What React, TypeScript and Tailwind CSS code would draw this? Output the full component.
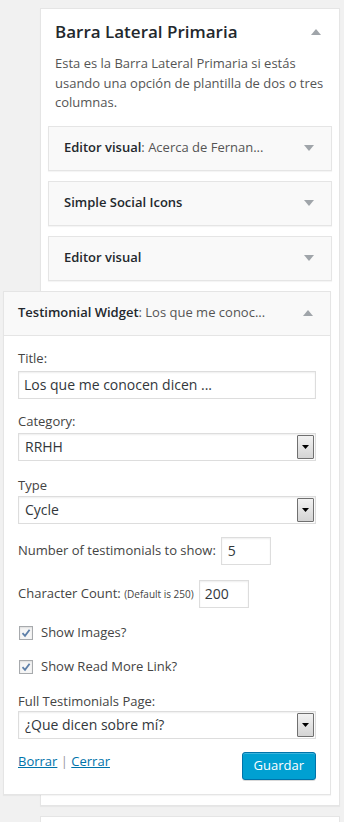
import React from "react";

const font = { fontFamily: '"Open Sans", "Noto Sans", sans-serif' };

function Arrow({ up = false }: { up?: boolean }) {
  return (
    <svg width="10" height="6" viewBox="0 0 10 6" className="shrink-0">
      {up ? <polygon points="0,6 5,0 10,6" fill="#a0a5aa" /> : <polygon points="0,0 10,0 5,6" fill="#a0a5aa" />}
    </svg>
  );
}

function WidgetBar({ title, sub }: { title: string; sub?: string }) {
  return (
    <div className="h-[45px] bg-[#f9f9f9] border border-[#e5e5e5] shadow-[0_1px_1px_rgba(0,0,0,0.04)] flex items-center justify-between pl-[15px] pr-[17px]">
      <div className="text-[13px] font-semibold text-[#23282d] whitespace-nowrap">
        {title}
        {sub && <span className="font-normal text-[#555]">{sub}</span>}
      </div>
      <Arrow />
    </div>
  );
}

function SelectBox({ value }: { value: string }) {
  return (
    <div className="h-[28px] border border-[#ddd] bg-white shadow-[inset_0_1px_2px_rgba(0,0,0,0.07)] flex items-center justify-between pl-[6px] pr-[1px]">
      <span className="text-[14px] text-[#32373c]">{value}</span>
      <div className="w-[17px] h-[24px] border border-[#707070] bg-gradient-to-b from-[#f2f2f2] to-[#d4d4d4] flex items-center justify-center rounded-[1px]">
        <svg width="7" height="4" viewBox="0 0 7 4">
          <polygon points="0,0 7,0 3.5,4" fill="#000" />
        </svg>
      </div>
    </div>
  );
}

function Check({ label }: { label: string }) {
  return (
    <div className="flex items-center h-[20px] gap-[8px] pl-[1px]">
      <div className="w-[14px] h-[14px] border border-[#a7aaad] bg-[#f6f6f6] shadow-[inset_0_1px_2px_rgba(0,0,0,0.1)] flex items-center justify-center">
        <svg width="10" height="10" viewBox="0 0 10 10">
          <path d="M1.5 5.2 L4 7.8 L8.6 1.8" stroke="#5d7fa8" strokeWidth="1.8" fill="none" />
        </svg>
      </div>
      <span className="text-[13px] text-[#444]">{label}</span>
    </div>
  );
}

export default function App() {
  return (
    <div className="min-h-[822px] bg-[#f1f1f1] pt-[8px] pl-[40px] overflow-hidden" style={font}>
      <div className="w-[300px] bg-white border border-[#e5e5e5] shadow-[0_1px_1px_rgba(0,0,0,0.04)] px-[7px] pb-[10px]">
        <div className="flex items-start justify-between pl-[7px] pr-[11px] pt-[11px]">
          <h2 className="text-[17px] font-semibold text-[#23282d] leading-[24px]">Barra Lateral Primaria</h2>
          <div className="pt-[9px]">
            <Arrow up />
          </div>
        </div>
        <p className="pl-[7px] pr-[6px] mt-[10px] text-[13px] leading-[19.5px] text-[#555]">
          Esta es la Barra Lateral Primaria si estás usando una opción de plantilla de dos o tres columnas.
        </p>
        <div className="mt-[13px] flex flex-col gap-[10px]">
          <WidgetBar title="Editor visual" sub=": Acerca de Fernan..." />
          <WidgetBar title="Simple Social Icons" />
          <WidgetBar title="Editor visual" />
          <div className="ml-[-45px] w-[328px] border border-[#e5e5e5] bg-white shadow-[0_1px_1px_rgba(0,0,0,0.04)]">
            <div className="h-[44px] bg-[#f9f9f9] border-b border-[#e5e5e5] flex items-center justify-between pl-[14px] pr-[17px]">
              <div className="text-[13px] font-semibold text-[#23282d] whitespace-nowrap">
                Testimonial Widget<span className="font-normal text-[#555]">: Los que me conoc...</span>
              </div>
              <Arrow up />
            </div>
            <div className="px-[14px] pt-[12px] pb-[14px] text-[13px] text-[#444]">
              <div className="leading-[20px]">Title:</div>
              <div className="h-[28px] mt-[3px] border border-[#ddd] shadow-[inset_0_1px_2px_rgba(0,0,0,0.07)] flex items-center pl-[5px] text-[14px] text-[#32373c]">
                Los que me conocen dicen ...
              </div>
              <div className="leading-[20px] mt-[12px]">Category:</div>
              <div className="mt-[2px]">
                <SelectBox value="RRHH" />
              </div>
              <div className="leading-[20px] mt-[14px]">Type</div>
              <div className="mt-[1px]">
                <SelectBox value="Cycle" />
              </div>
              <div className="flex items-center mt-[13px] gap-[5px]">
                <span>Number of testimonials to show:</span>
                <div className="w-[50px] h-[28px] border border-[#ddd] shadow-[inset_0_1px_2px_rgba(0,0,0,0.07)] flex items-center pl-[6px] text-[14px] text-[#32373c]">5</div>
              </div>
              <div className="flex items-center mt-[15px] gap-[5px]">
                <span>
                  Character Count: <span className="text-[10px]">(Default is 250)</span>
                </span>
                <div className="w-[50px] h-[28px] border border-[#ddd] shadow-[inset_0_1px_2px_rgba(0,0,0,0.07)] flex items-center pl-[5px] text-[14px] text-[#32373c]">200</div>
              </div>
              <div className="mt-[15px]">
                <Check label="Show Images?" />
              </div>
              <div className="mt-[14px]">
                <Check label="Show Read More Link?" />
              </div>
              <div className="leading-[19px] mt-[15px]">Full Testimonials Page:</div>
              <div>
                <SelectBox value="¿Que dicen sobre mí?" />
              </div>
              <div className="flex justify-between items-start mt-[12px]">
                <div className="leading-[20px]">
                  <span className="text-[#0073aa] underline">Borrar</span>
                  <span className="text-[#999]"> | </span>
                  <span className="text-[#0073aa] underline">Cerrar</span>
                </div>
                <div className="h-[28px] mt-[1px] px-[11px] bg-[#00a0d2] border border-[#0073aa] rounded-[3px] shadow-[inset_0_1px_0_rgba(120,200,230,0.5),0_1px_0_rgba(0,0,0,0.15)] flex items-center text-white text-[13px]">
                  Guardar
                </div>
              </div>
            </div>
          </div>
        </div>
      </div>
      <div className="w-[300px] h-[20px] mt-[10px] bg-white border border-[#e5e5e5]" />
    </div>
  );
}
